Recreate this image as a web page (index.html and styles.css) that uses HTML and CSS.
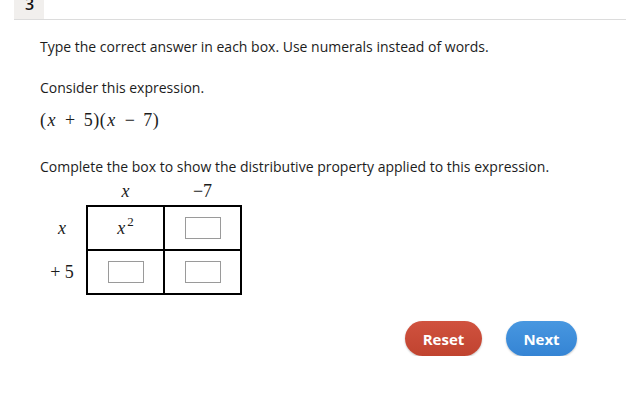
FILE: index.html
```html
<!DOCTYPE html>
<html>
<head>
<meta charset="utf-8">
<link rel="stylesheet" href="styles.css">
</head>
<body>
<div class="topbar"><div class="tab">3</div></div>
<main class="content">
  <p class="line first">Type the correct answer in each box. Use numerals instead of words.</p>
  <p class="line second">Consider this expression.</p>
  <div class="math">(<i>x</i><span class="op">+</span>5)(<i>x</i><span class="op">−</span>7)</div>
  <p class="line third">Complete the box to show the distributive property applied to this expression.</p>
  <table class="dist">
    <tr class="hrow"><td class="corner"></td><th class="colhead"><i>x</i></th><th class="colhead">−7</th></tr>
    <tr><th class="rowhead"><i>x</i></th><td class="cell"><i>x</i><sup>2</sup></td><td class="cell"><span class="box"></span></td></tr>
    <tr><th class="rowhead">+ 5</th><td class="cell"><span class="box"></span></td><td class="cell"><span class="box"></span></td></tr>
  </table>
  <div class="actions">
    <button class="btn reset">Reset</button>
    <button class="btn next">Next</button>
  </div>
</main>
</body>
</html>
```
FILE: styles.css
```css
html, body {
  margin: 0;
  padding: 0;
  background: #ffffff;
}
body {
  font-family: "Open Sans", "Liberation Sans", sans-serif;
  color: #1c1c1c;
  font-size: 14px;
  overflow: hidden;
}
.topbar {
  margin-left: 14px;
  height: 19px;
  border-bottom: 1px solid #dcdcdc;
  display: flex;
}
.tab {
  width: 30px;
  height: 19px;
  background: #f1efed;
  font-size: 16px;
  font-weight: 600;
  line-height: 8px;
  padding-left: 11px;
  box-sizing: border-box;
  overflow: hidden;
  color: #111;
}
.content {
  padding: 17px 49px 0 40px;
}
.line {
  margin: 0;
  line-height: 20px;
}
.second { margin-top: 21px; }
.math {
  margin-top: 10px;
  font-family: "Liberation Serif", "DejaVu Serif", serif;
  font-size: 18px;
  line-height: 24px;
  letter-spacing: 0.5px;
}
.math i { margin: 0 1px; }
.math .op { margin: 0 8px; }
.third { margin-top: 25px; }
.dist {
  border-collapse: collapse;
  font-family: "Liberation Serif", "DejaVu Serif", serif;
  font-size: 18px;
  margin-left: 0;
}
.dist th { font-weight: normal; }
.hrow th, .hrow td {
  height: 28px;
  padding: 0;
  line-height: 28px;
  border: none;
}
.corner { width: 47px; padding: 0; }
.colhead { width: 77px; text-align: center; }
.rowhead {
  width: 47px;
  padding: 0 2px 0 0;
  box-sizing: border-box;
  text-align: center;
  height: 44px;
}
.cell {
  border: 2px solid #000;
  width: 73px;
  height: 40px;
  padding: 0;
  text-align: center;
  vertical-align: middle;
}
.cell sup { font-size: 13px; vertical-align: 8px; line-height: 0; margin-left: 2px; }
.box {
  display: inline-block;
  width: 34px;
  height: 20px;
  border: 1px solid #9a9a9a;
  vertical-align: middle;
}
.actions {
  margin-top: 26px;
  display: flex;
  justify-content: flex-end;
  gap: 24px;
}
.btn {
  height: 35px;
  border: none;
  border-radius: 18px;
  color: #fff;
  font-family: "Open Sans", "Liberation Sans", sans-serif;
  font-weight: 700;
  font-size: 15px;
  padding: 0;
  box-shadow: 0 1px 2px rgba(0,0,0,0.25);
}
.reset {
  width: 77px;
  background: linear-gradient(#d0523f, #c0432f);
}
.next {
  width: 71px;
  background: linear-gradient(#4797e0, #3584d4);
}
```
